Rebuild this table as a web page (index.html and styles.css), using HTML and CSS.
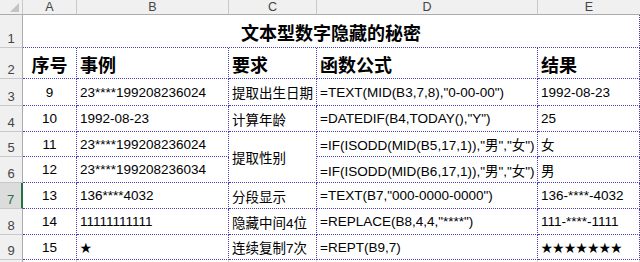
FILE: index.html
```html
<!DOCTYPE html>
<html lang="zh">
<head>
<meta charset="utf-8">
<link rel="stylesheet" href="styles.css">
</head>
<body>
<div class="sheet">
  <div class="corner"><span class="tri"></span></div>
  <div class="colhead">A</div>
  <div class="colhead">B</div>
  <div class="colhead">C</div>
  <div class="colhead">D</div>
  <div class="colhead last">E</div>

  <div class="rowhead">1</div>
  <div class="title">文本型数字隐藏的秘密</div>

  <div class="rowhead">2</div>
  <div class="cell th center">序号</div>
  <div class="cell th">事例</div>
  <div class="cell th">要求</div>
  <div class="cell th">函数公式</div>
  <div class="cell th">结果</div>

  <div class="rowhead">3</div>
  <div class="cell center">9</div>
  <div class="cell">23****199208236024</div>
  <div class="cell">提取出生日期</div>
  <div class="cell">=TEXT(MID(B3,7,8),"0-00-00")</div>
  <div class="cell">1992-08-23</div>

  <div class="rowhead">4</div>
  <div class="cell center">10</div>
  <div class="cell">1992-08-23</div>
  <div class="cell">计算年龄</div>
  <div class="cell">=DATEDIF(B4,TODAY(),"Y")</div>
  <div class="cell">25</div>

  <div class="rowhead">5</div>
  <div class="cell center">11</div>
  <div class="cell">23****199208236024</div>
  <div class="cell span2">提取性别</div>
  <div class="cell">=IF(ISODD(MID(B5,17,1)),"男","女")</div>
  <div class="cell">女</div>

  <div class="rowhead">6</div>
  <div class="cell center">12</div>
  <div class="cell">23****199208236034</div>
  <div class="cell">=IF(ISODD(MID(B6,17,1)),"男","女")</div>
  <div class="cell">男</div>

  <div class="rowhead selected">7</div>
  <div class="cell center">13</div>
  <div class="cell">136****4032</div>
  <div class="cell">分段显示</div>
  <div class="cell">=TEXT(B7,"000-0000-0000")</div>
  <div class="cell">136-****-4032</div>

  <div class="rowhead">8</div>
  <div class="cell center">14</div>
  <div class="cell">11111111111</div>
  <div class="cell">隐藏中间4位</div>
  <div class="cell">=REPLACE(B8,4,4,"****")</div>
  <div class="cell">111-****-1111</div>

  <div class="rowhead">9</div>
  <div class="cell center">15</div>
  <div class="cell"><span class="star">★</span></div>
  <div class="cell">连续复制7次</div>
  <div class="cell">=REPT(B9,7)</div>
  <div class="cell"><span class="star">★★★★★★★</span></div>

  <div class="rowhead"></div>
  <div class="blank"></div>
  <div class="blank"></div>
  <div class="blank"></div>
  <div class="blank"></div>
  <div class="blank"></div>
</div>
</body>
</html>
```
FILE: styles.css
```css
html, body {
  margin: 0;
  padding: 0;
  background: #ffffff;
  overflow: hidden;
}

.sheet {
  width: 640px;
  height: 262px;
  overflow: hidden;
  display: grid;
  grid-template-columns: 23px 54px 152px 88px 221px 102px;
  grid-template-rows: 15px 33px 31px 27px 26px 25px 26px 26px 26px 25px 26px;
  font-family: "Liberation Sans", "Noto Sans CJK SC", sans-serif;
  font-size: 13.5px;
  color: #000;
}

.sheet > div {
  box-sizing: border-box;
  min-width: 0;
}

.corner {
  background: #f0f0f0;
  border-right: 1px solid #c8c8c8;
  border-bottom: 1px solid #ababab;
  position: relative;
}

.tri {
  position: absolute;
  right: 3px;
  bottom: 2px;
  width: 0;
  height: 0;
  border-left: 9px solid transparent;
  border-bottom: 9px solid #c4c4c4;
}

.colhead {
  background: #f0f0f0;
  border-right: 1px solid #c8c8c8;
  border-bottom: 1px solid #ababab;
  color: #444;
  font-size: 12.5px;
  display: flex;
  align-items: center;
  justify-content: center;
  line-height: 1;
}

.colhead.last {
  border-right: none;
}

.rowhead {
  background: #f0f0f0;
  border-right: 1px solid #ababab;
  border-bottom: 1px solid #c8c8c8;
  color: #444;
  font-size: 13px;
  display: flex;
  align-items: flex-end;
  justify-content: center;
  padding-bottom: 2px;
  line-height: 1;
}

.rowhead.selected {
  background: #dcdcdc;
  color: #217346;
  border-right: 2px solid #217346;
}

.title {
  grid-column: span 5;
  border-right: 1px dotted #4a3fbf;
  border-bottom: 1px dotted #4a3fbf;
  display: flex;
  align-items: center;
  justify-content: center;
  font-weight: bold;
  font-size: 18px;
  padding-top: 2px;
}

.cell {
  border-right: 1px dotted #4a3fbf;
  border-bottom: 1px dotted #4a3fbf;
  display: flex;
  align-items: center;
  padding-left: 3px;
  white-space: nowrap;
  overflow: visible;
}

.cell.center {
  justify-content: center;
  padding-left: 0;
}

.cell.th {
  font-weight: bold;
  font-size: 18px;
  padding-top: 1px;
}

.cell.span2 {
  grid-row: span 2;
}

.blank {
  border-right: 1px solid #dadada;
}

.star {
  font-family: "Noto Sans CJK SC", sans-serif;
  font-size: 11.6px;
}
```
